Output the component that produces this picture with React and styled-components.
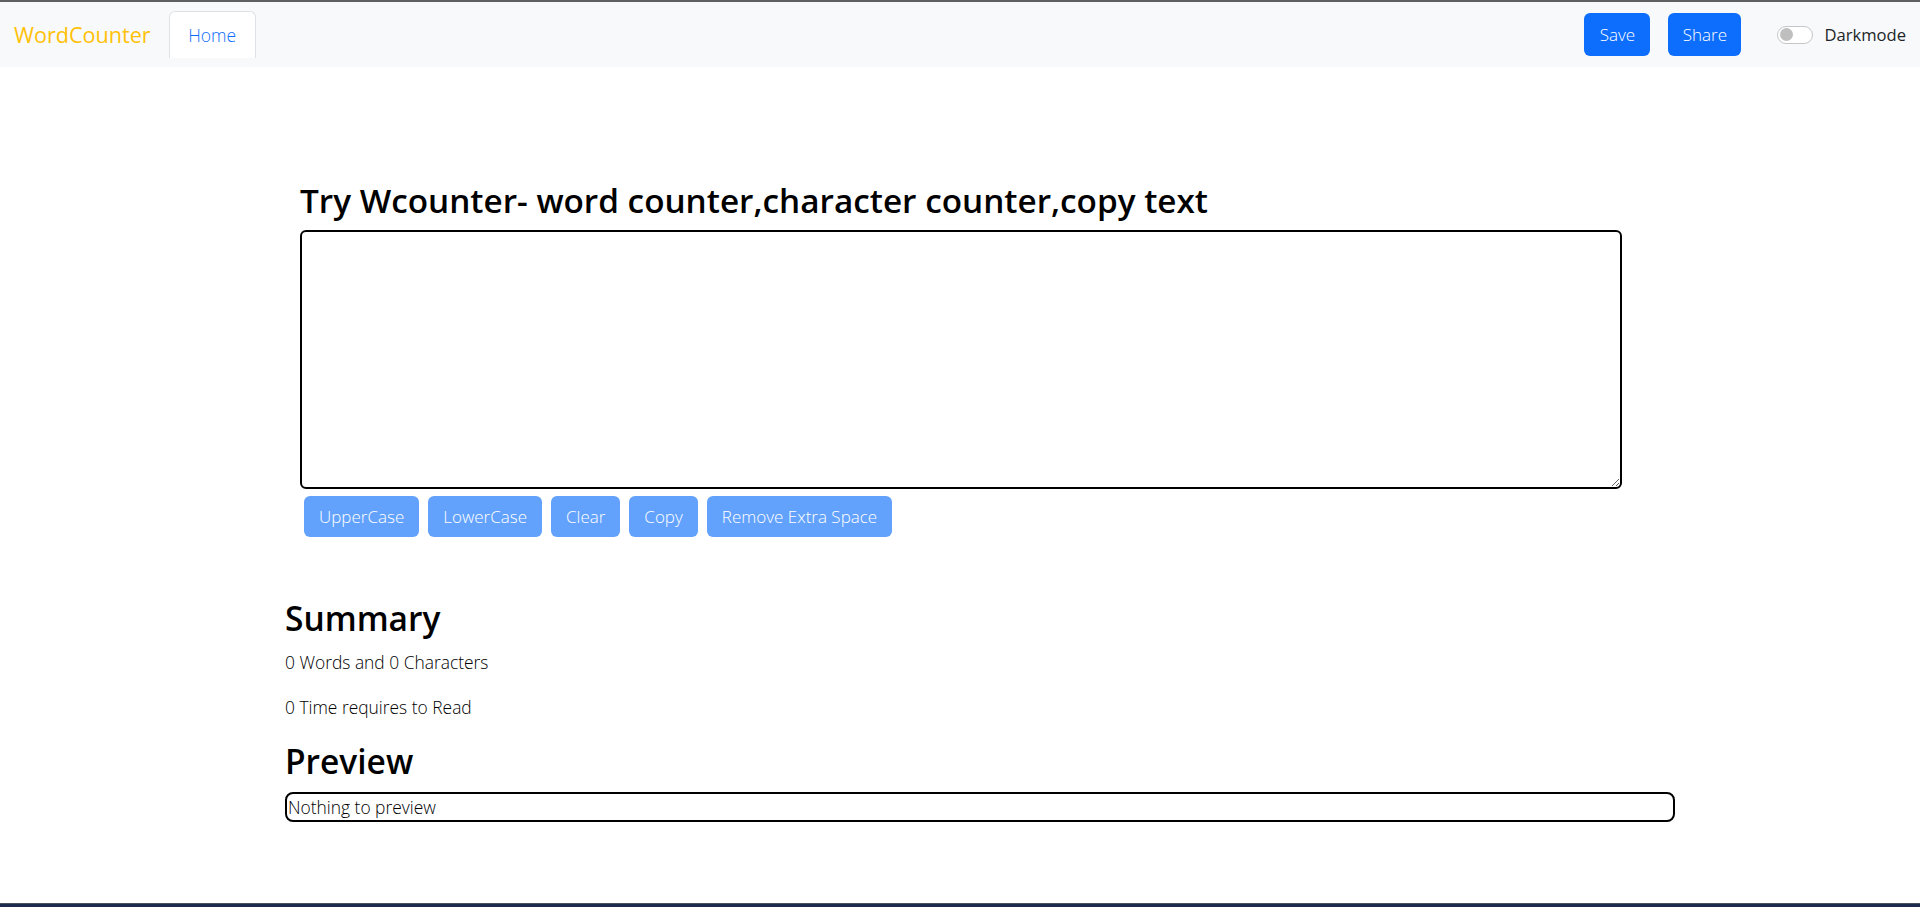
import React from 'react';
import styled, { createGlobalStyle } from 'styled-components';

const GlobalStyle = createGlobalStyle`
  * { box-sizing: border-box; }
  html, body { margin: 0; padding: 0; }
  body {
    font-family: 'Open Sans', 'Noto Sans', sans-serif;
    background: #fff;
    color: #212529;
  }
`;

const Page = styled.div`
  min-height: 100vh;
  display: flex;
  flex-direction: column;
  border-top: 2px solid #5f6062;
`;

const Navbar = styled.nav`
  height: 65px;
  display: flex;
  align-items: center;
  padding: 0 14px;
  background: #f8f9fa;
`;

const Brand = styled.a`
  color: #ffc107;
  font-size: 21.6px;
  text-decoration: none;
`;

const Tab = styled.a`
  margin-left: 18px;
  height: 47px;
  width: 87px;
  display: flex;
  align-items: center;
  justify-content: center;
  background: #fff;
  border: 1px solid #dee2e6;
  border-bottom: none;
  border-radius: 6px 6px 0 0;
  color: #0d6efd;
  font-size: 17.5px;
  font-weight: 300;
  text-decoration: none;
  align-self: flex-end;
  margin-bottom: 9px;
`;

const Spacer = styled.div`
  flex: 1;
`;

const NavButton = styled.button`
  height: 43px;
  width: ${(p) => p.$w}px;
  margin-left: ${(p) => p.$ml || 0}px;
  border: none;
  border-radius: 6px;
  background: #0d6efd;
  color: #fff;
  font-family: inherit;
  font-size: 17px;
  font-weight: 300;
`;

const Switch = styled.span`
  margin-left: 36px;
  width: 36px;
  height: 18px;
  border: 1px solid #c4c6c8;
  border-radius: 9px;
  background: #fff;
  display: flex;
  align-items: center;
  padding-left: 2px;

  &::before {
    content: '';
    width: 13px;
    height: 13px;
    border-radius: 50%;
    background: #bfbfbf;
  }
`;

const SwitchLabel = styled.label`
  margin-left: 11px;
  font-size: 16.6px;
  color: #212529;
`;

const Main = styled.main`
  flex: 1;
  padding: 113px 245px 0 285px;
  color: #000;
`;

const Editor = styled.section`
  margin-left: 15px;
  width: 1322px;
`;

const Title = styled.h1`
  margin: 0 0 10px;
  font-size: 33.3px;
  font-weight: 600;
  line-height: 40px;
`;

const TextBox = styled.textarea`
  display: block;
  width: 100%;
  height: 259px;
  border: 2px solid #000;
  border-radius: 6px;
  font-family: inherit;
  font-size: 16px;
  padding: 6px 12px;
  outline: none;
`;

const ButtonRow = styled.div`
  display: flex;
  gap: 9px;
  margin-top: 7px;
  padding-left: 4px;
`;

const ActionButton = styled.button`
  height: 41px;
  padding: 0 15px;
  border: none;
  border-radius: 6px;
  background: #62a2fd;
  color: #fff;
  font-family: inherit;
  font-size: 17px;
  font-weight: 300;
`;

const Heading = styled.h2`
  margin: ${(p) => p.$mt}px 0 0;
  font-size: 33.5px;
  font-weight: 600;
  line-height: 1.2;
`;

const Line = styled.p`
  margin: ${(p) => p.$mt}px 0 0;
  font-size: 17.4px;
  font-weight: 300;
  line-height: 24px;
`;

const PreviewBox = styled.div`
  margin-top: 11px;
  border: 2px solid #000;
  border-radius: 8px;
  padding: 1px 1px 1px;
  font-size: 17.4px;
  font-weight: 300;
  line-height: 24px;
`;

const Taskbar = styled.div`
  height: 4px;
  border-top: 1px solid #4b505a;
  background: #1c2a4c;
`;

const actions = ['UpperCase', 'LowerCase', 'Clear', 'Copy', 'Remove Extra Space'];

export default function App() {
  return (
    <Page>
      <GlobalStyle />
      <Navbar>
        <Brand href="#">WordCounter</Brand>
        <Tab href="#">Home</Tab>
        <Spacer />
        <NavButton $w={66}>Save</NavButton>
        <NavButton $w={73} $ml={18}>Share</NavButton>
        <Switch />
        <SwitchLabel>Darkmode</SwitchLabel>
      </Navbar>
      <Main>
        <Editor>
          <Title>Try Wcounter- word counter,character counter,copy text</Title>
          <TextBox rows={8} />
          <ButtonRow>
            {actions.map((a) => (
              <ActionButton key={a}>{a}</ActionButton>
            ))}
          </ButtonRow>
        </Editor>
        <Heading $mt={61}>Summary</Heading>
        <Line $mt={12}>0 Words and 0 Characters</Line>
        <Line $mt={21}>0 Time requires to Read</Line>
        <Heading $mt={22}>Preview</Heading>
        <PreviewBox>Nothing to preview</PreviewBox>
      </Main>
      <Taskbar />
    </Page>
  );
}
